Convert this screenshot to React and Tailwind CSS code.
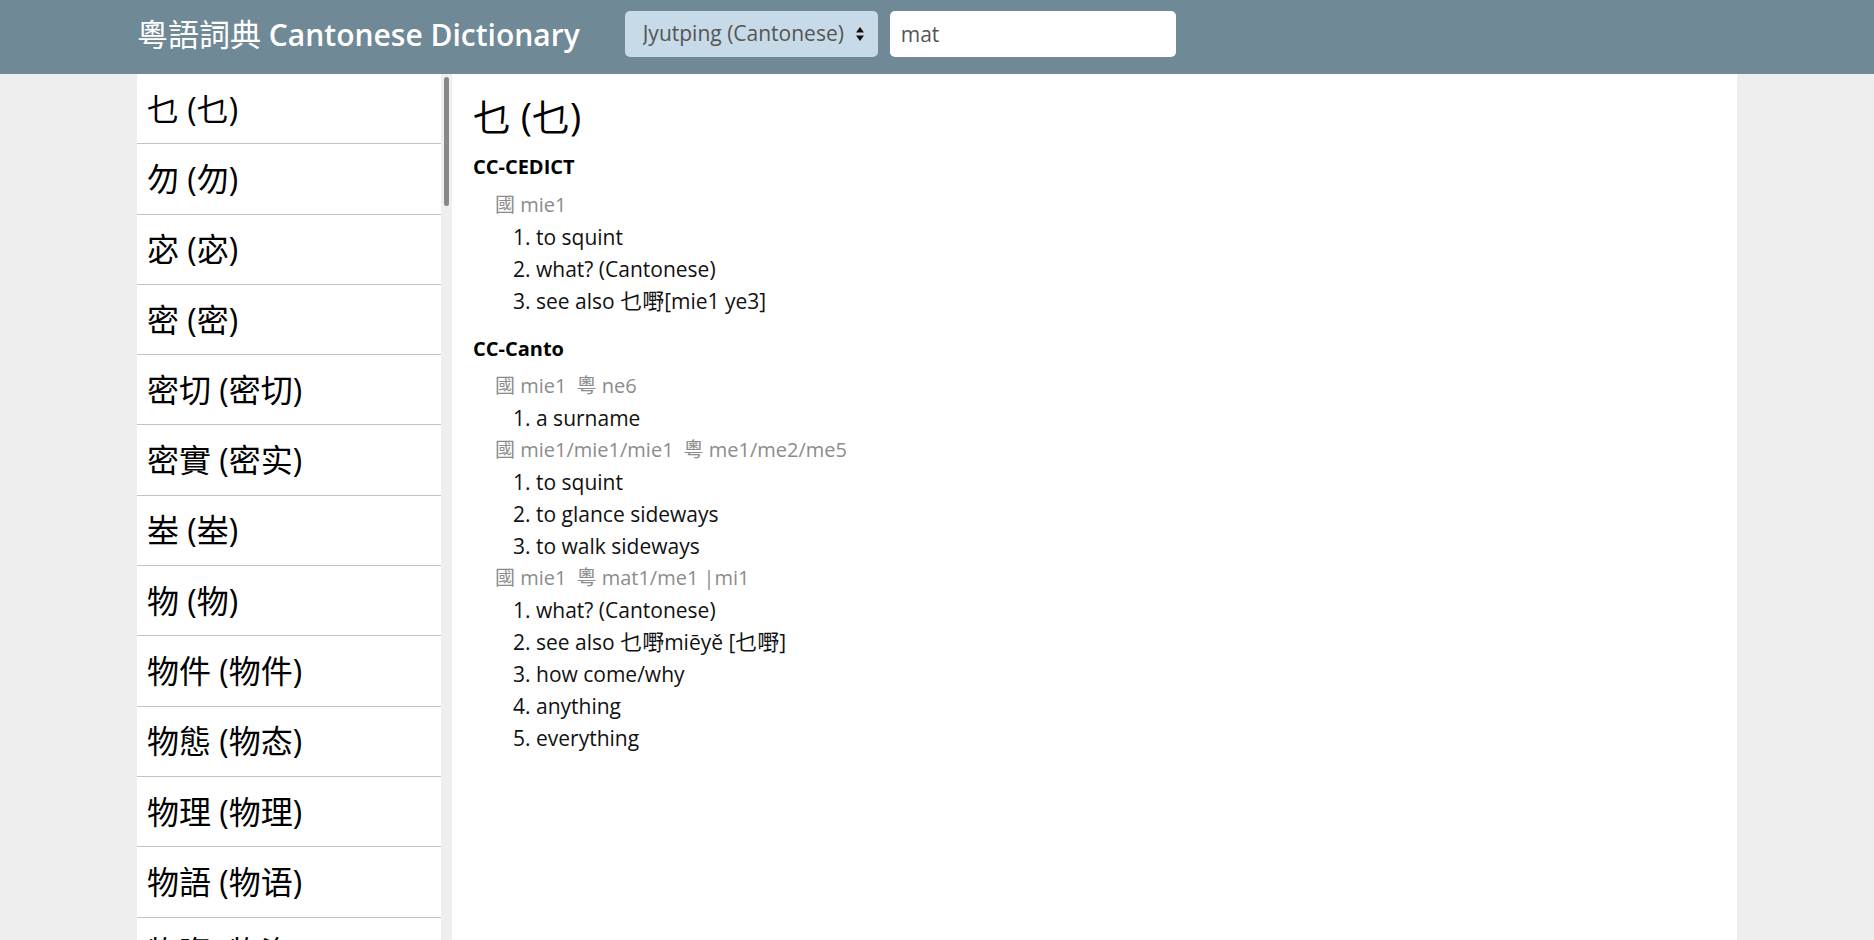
import { useState } from 'react';

const font = { fontFamily: '"Open Sans", "Noto Sans CJK TC", sans-serif' };

const words = [
  '乜 (乜)',
  '勿 (勿)',
  '宓 (宓)',
  '密 (密)',
  '密切 (密切)',
  '密實 (密实)',
  '峚 (峚)',
  '物 (物)',
  '物件 (物件)',
  '物態 (物态)',
  '物理 (物理)',
  '物語 (物语)',
  '物資 (物资)',
];

function Cjk({ children }) {
  return <span className="text-[22px] leading-none">{children}</span>;
}

function Reading({ man, jyut }) {
  return (
    <div className="ml-[22px] text-[20px] text-[#8c8c8c]">
      <span>國 {man}</span>
      {jyut && <span className="ml-[10px]">粵 {jyut}</span>}
    </div>
  );
}

function Defs({ items }) {
  return (
    <ol className="ml-[40px]">
      {items.map((d, i) => (
        <li key={i}>
          {i + 1}. {d}
        </li>
      ))}
    </ol>
  );
}

export default function App() {
  const [mode, setMode] = useState('jyutping');
  const [query, setQuery] = useState('mat');

  return (
    <div className="min-h-screen bg-[#eeeeee]" style={font}>
      <header className="h-[74px] bg-[#708996]">
        <div className="max-w-[1600px] mx-auto h-full flex items-center pb-[6px]">
          <h1 className="text-white text-[30px] font-semibold whitespace-nowrap">
            <span className="font-normal text-[31px]">粵語詞典</span> Cantonese Dictionary
          </h1>
          <div className="relative ml-[45px]">
            <select
              value={mode}
              onChange={(e) => setMode(e.target.value)}
              className="appearance-none w-[253px] h-[46px] rounded-[5px] bg-[#c7dae7] pl-[18px] text-[21px] text-[#555] outline-none"
            >
              <option value="jyutping">Jyutping (Cantonese)</option>
              <option value="pinyin">Pinyin (Mandarin)</option>
              <option value="english">English</option>
            </select>
            <svg
              className="absolute right-[14px] top-[16px] pointer-events-none"
              width="8"
              height="14"
              viewBox="0 0 8 14"
            >
              <path d="M4 0 L8 5.5 L0 5.5 Z" fill="#111" />
              <path d="M0 8.5 L8 8.5 L4 14 Z" fill="#111" />
            </svg>
          </div>
          <input
            value={query}
            onChange={(e) => setQuery(e.target.value)}
            className="ml-[12px] w-[286px] h-[46px] rounded-[5px] bg-white pl-[11px] text-[21px] text-[#555] outline-none"
          />
        </div>
      </header>

      <main className="max-w-[1600px] mx-auto h-[866px] bg-white flex overflow-hidden">
        <aside className="flex shrink-0">
          <ul className="w-[304px]">
            {words.map((w) => (
              <li
                key={w}
                className="h-[70.3px] border-b border-[#c4c4c4] flex items-center pl-[10px] text-[32px] text-black whitespace-nowrap"
              >
                {w}
              </li>
            ))}
          </ul>
          <div className="w-[11px] bg-[#efefef] flex justify-center pt-[3px]">
            <div className="w-[5px] h-[129px] rounded-full bg-[#888]" />
          </div>
        </aside>

        <section className="pl-[21px] pt-[18px] text-[21px] leading-[32px] text-[#111]">
          <h2 className="text-[38px] leading-[48px] text-black">乜 (乜)</h2>

          <h3 className="mt-[11px] text-[20px] font-bold text-black">CC-CEDICT</h3>
          <div className="mt-[6px]">
            <Reading man="mie1" />
            <Defs
              items={[
                'to squint',
                'what? (Cantonese)',
                <>
                  see also <Cjk>乜嘢</Cjk>[mie1 ye3]
                </>,
              ]}
            />
          </div>

          <h3 className="mt-[16px] text-[20px] font-bold text-black">CC-Canto</h3>
          <div className="mt-[5px]">
            <Reading man="mie1" jyut="ne6" />
            <Defs items={['a surname']} />
            <Reading man="mie1/mie1/mie1" jyut="me1/me2/me5" />
            <Defs items={['to squint', 'to glance sideways', 'to walk sideways']} />
            <Reading man="mie1" jyut="mat1/me1 |mi1" />
            <Defs
              items={[
                'what? (Cantonese)',
                <>
                  see also <Cjk>乜嘢</Cjk>miēyě [<Cjk>乜嘢</Cjk>]
                </>,
                'how come/why',
                'anything',
                'everything',
              ]}
            />
          </div>
        </section>
      </main>
    </div>
  );
}
